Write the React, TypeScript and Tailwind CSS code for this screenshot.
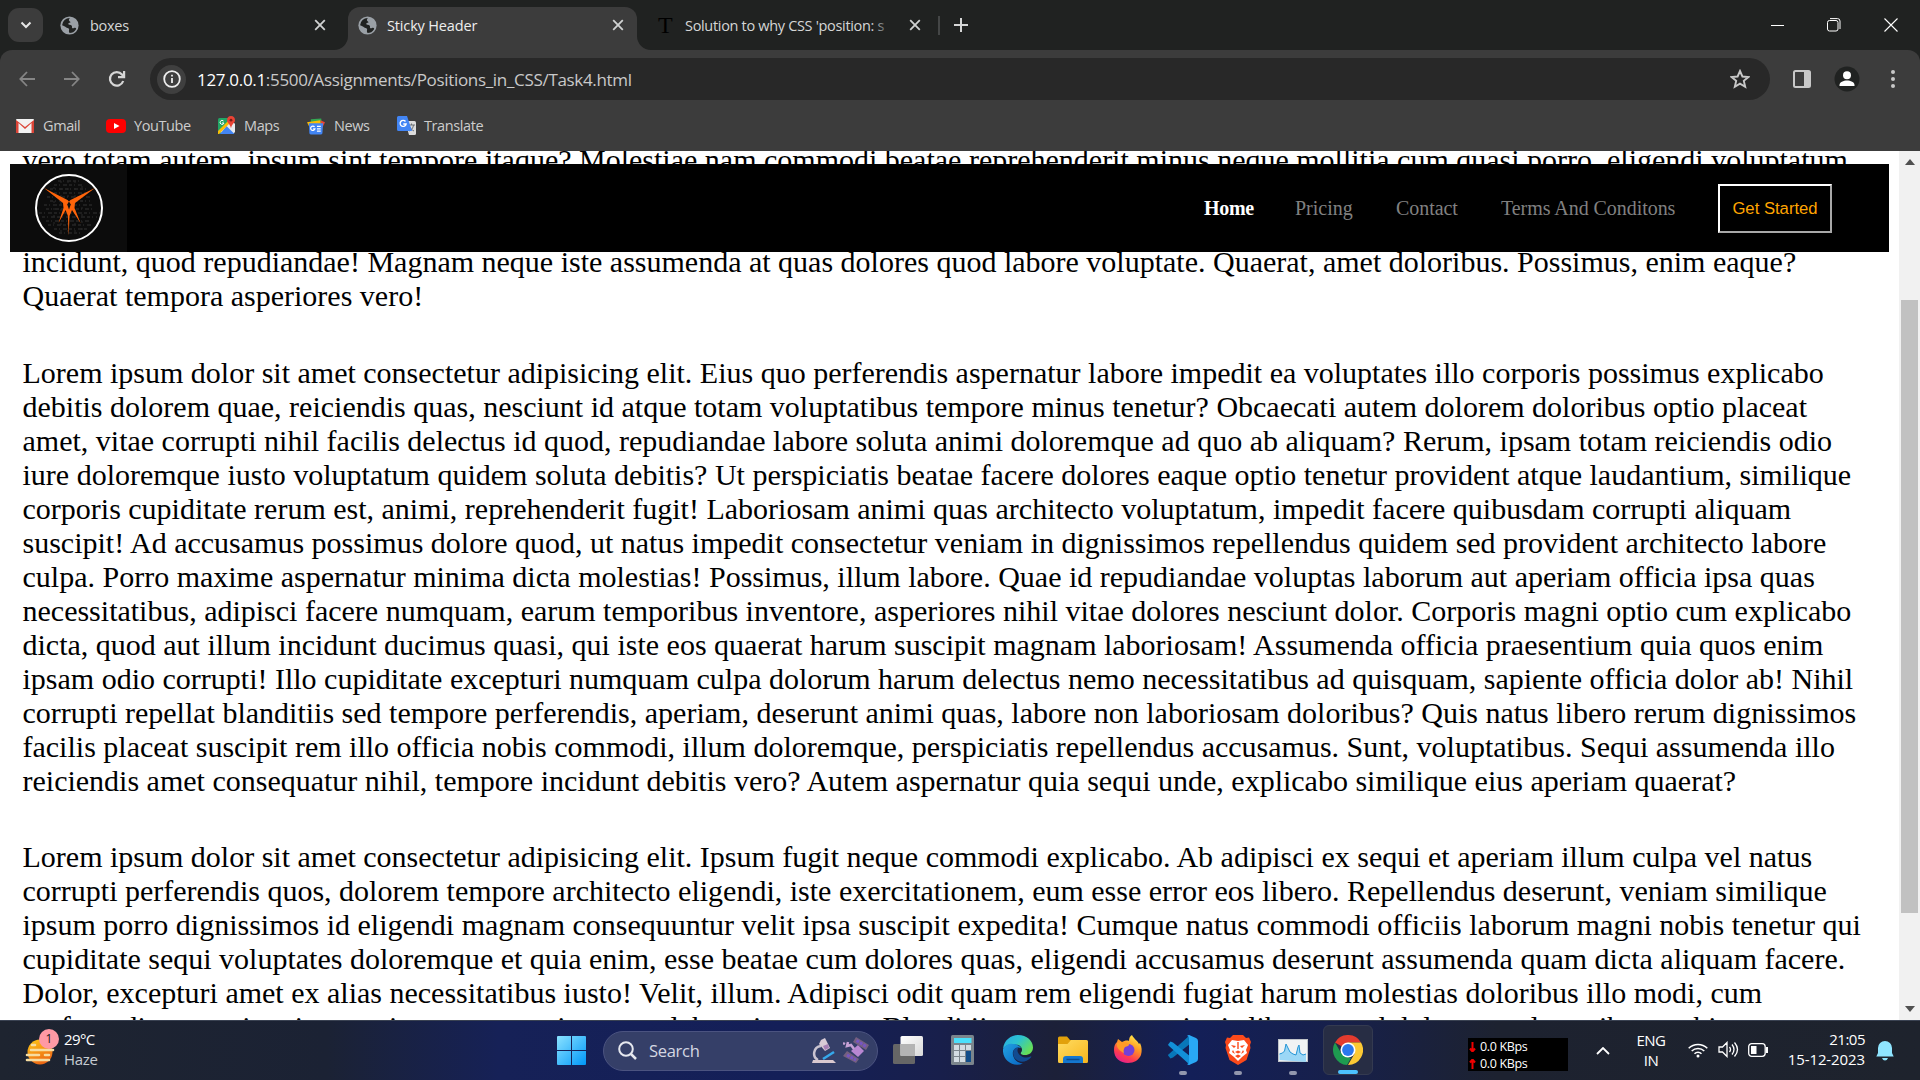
import React from "react";

const ui = "font-['Open_Sans','Noto_Sans',sans-serif]";

function Globe() {
  return (
    <svg width="19" height="19" viewBox="0 0 20 20" className="shrink-0">
      <circle cx="10" cy="10" r="9.6" fill="#9aa0a6" />
      <path d="M10.5 2.2c-1.3 1-1.6 2.5-.4 3.2 1.2.6 1.2 1.500-.2 1.800-1.700.3-1.500 2 .1 2.100 2 .1 3 1 2.600 2.400-.3 1.200.9 1.700 2.100 1 1.600-.9 2.900.1 2 1.600A8 8 0 0 1 10 18c-.4-1.500-.9-2-.5-3 .5-1.200-.3-1.900-1.600-2.300C6 12 5 10.800 3.500 10.300l-1.300-.6A8 8 0 0 1 10.500 2.200z" fill="#202221" />
    </svg>
  );
}

function Cross() {
  return (
    <svg width="12" height="12" viewBox="0 0 12 12" className="shrink-0">
      <path d="M1.200 1.200l9.600 9.600M10.800 1.200L1.200 10.800" stroke="#d0d2d2" strokeWidth="1.800" />
    </svg>
  );
}

function TabStrip() {
  return (
    <div className="flex h-[50px] items-stretch bg-[#202221] text-[14.500px] text-[#d5d6d6]">
      <div className="ml-2 mt-2 flex h-[34px] w-[35px] items-center justify-center rounded-[11px] bg-[#3c3c3c]">
        <svg width="12" height="8" viewBox="0 0 12 8"><path d="M1.500 1.500L6 6l4.500-4.500" fill="none" stroke="#e6e6e6" strokeWidth="2" /></svg>
      </div>
      <div className="flex w-[283px] items-center pl-[17px]">
        <Globe />
        <span className="ml-[11px] flex-1 pt-[1px] tracking-[-0.300px]">boxes</span>
        <Cross />
      </div>
      <div className="relative ml-[22px] mt-[7px] flex w-[289px] items-center rounded-t-[12px] bg-[#3c3c3c] pb-[7px] pl-[10px] pr-[13px] text-[#eeeeee]">
        <svg width="14" height="14" className="absolute -left-[14px] bottom-0"><path d="M14 0v14H0A14 14 0 0 0 14 0z" fill="#3c3c3c" /></svg>
        <svg width="14" height="14" className="absolute -right-[14px] bottom-0"><path d="M0 0v14h14A14 14 0 0 1 0 0z" fill="#3c3c3c" /></svg>
        <Globe />
        <span className="ml-[10px] flex-1 whitespace-nowrap pt-[1px] tracking-[-0.150px]">Sticky Header</span>
        <Cross />
      </div>
      <div className="flex w-[284px] items-center pl-[21px]">
        <span className="w-4 font-['Liberation_Serif',serif] text-[24px] text-black">T</span>
        <div className="relative ml-[11px] w-[207px] overflow-hidden whitespace-nowrap pt-[1px] tracking-[-0.320px]">
          Solution to why CSS 'position: s
          <div className="absolute inset-y-0 right-0 w-[20px] bg-gradient-to-r from-transparent to-[#202221]" />
        </div>
        <div className="ml-[17px]"><Cross /></div>
      </div>
      <div className="ml-[17px] mt-4 h-[19px] w-[2px] bg-[#444646]" />
      <svg width="14" height="14" className="ml-[14px] mt-[18px]"><path d="M7 0v14M0 7h14" stroke="#d5d6d6" strokeWidth="2" /></svg>
      <div className="ml-auto flex items-center gap-[43px] pr-[22px]">
        <svg width="14" height="14"><path d="M1 7.500h13" stroke="#fff" /></svg>
        <svg width="14" height="14" fill="none" stroke="#fff"><rect x="0.500" y="2.500" width="10.500" height="10.500" rx="2" /><path d="M3 .6h7.500a2.500 2.500 0 0 1 2.500 2.500V11" /></svg>
        <svg width="14" height="14"><path d="M.5.5l13 13M13.500.5l-13 13" stroke="#fff" strokeWidth="1.100" /></svg>
      </div>
    </div>
  );
}

function AddressBar() {
  return (
    <div className="flex h-[58px] items-center">
      <svg width="16" height="16" viewBox="0 0 16 16" className="ml-[19px]" fill="none" stroke="#858585" strokeWidth="1.800"><path d="M16 8H1.500M8 1L1.300 8 8 15" /></svg>
      <svg width="16" height="16" viewBox="0 0 16 16" className="ml-[29px]" fill="none" stroke="#858585" strokeWidth="1.800"><path d="M0 8h14.500M8 1l6.700 7L8 15" /></svg>
      <svg width="18" height="18" viewBox="0 0 18 18" className="ml-[28px]" fill="none" stroke="#d6d6d6" strokeWidth="2.200"><path d="M15.200 11A6.800 6.800 0 1 1 14 4.500L16 7M16.100 1v6.200H10" /></svg>
      <div className="ml-[24px] flex h-[42px] w-[1620px] items-center rounded-full bg-[#282828] pl-[7px] pr-[20px]">
        <div className="flex h-[29px] w-[29px] items-center justify-center rounded-full bg-[#3f3f3f]">
          <svg width="18" height="18" fill="none" stroke="#eee" strokeWidth="1.800"><circle cx="9" cy="9" r="7.800" /><path d="M9 8v5M9 4.800v1.800" /></svg>
        </div>
        <span className="ml-[11px] flex-1 whitespace-nowrap pt-[1px] text-[17px] tracking-[-0.320px] text-[#c9c9c9]"><span className="text-white">127.0.0.1</span>:5500/Assignments/Positions_in_CSS/Task4.html</span>
        <svg width="20" height="20" viewBox="0 0 20 20" fill="none" stroke="#c8c8c8" strokeWidth="1.900"><path d="M10 2l2.400 5.500 6 .5-4.600 3.900 1.400 5.900-5.200-3.200-5.200 3.200 1.400-5.900L1.600 8l6-.5z" /></svg>
      </div>
      <svg width="18" height="18" className="ml-[23px]"><rect x="1" y="1" width="16" height="16" rx="1.500" fill="none" stroke="#c8c8c8" strokeWidth="2" /><rect x="11" y="1" width="6" height="16" fill="#c8c8c8" /></svg>
      <svg width="26" height="26" className="ml-[23px]"><circle cx="13" cy="13" r="12.500" fill="#202221" /><circle cx="13" cy="9.200" r="4" fill="#fff" /><path d="M5.500 20v-1c0-3 4-4.500 7.500-4.500s7.500 1.500 7.500 4.500v1z" fill="#fff" /></svg>
      <svg width="4" height="20" className="ml-[31px]" fill="#c8c8c8"><circle cx="2" cy="3" r="2" /><circle cx="2" cy="10" r="2" /><circle cx="2" cy="17" r="2" /></svg>
    </div>
  );
}

const bookmarks = [
  { label: "Gmail", w: "w-[91px]", icon: <svg width="18" height="16" viewBox="0 0 18 16"><rect y="1" width="18" height="14" rx="1" fill="#f2f2f2" /><path d="M0 15V2l9 7 9-7v13h-2.500V5L9 11 2.500 5v10z" fill="#db4437" /></svg> },
  { label: "YouTube", w: "w-[110px]", icon: <svg width="20" height="16" viewBox="0 0 20 16"><rect y="1" width="20" height="14" rx="4" fill="#f00" /><path d="M8 5l5.500 3L8 11z" fill="#fff" /></svg> },
  { label: "Maps", w: "w-[90px]", icon: <svg width="19" height="19" viewBox="0 0 19 19"><rect x="1" y="2" width="16" height="16" rx="1.500" fill="#22a565" /><path d="M1 16L14 3l4 5v8l-2 2z" fill="#e8eaed" /><path d="M9.500 10l8 8H3z" fill="#4285f4" /><path d="M1 15L11 5l2 2L2 18H1z" fill="#fbbc04" /><path d="M14 0a4.200 4.200 0 0 0-4 4.200c0 3 3.200 3.300 4 8 .8-4.700 4-5 4-8A4.200 4.200 0 0 0 14 0z" fill="#ea4335" /><circle cx="14" cy="4.200" r="1.400" fill="#7a1c14" /><path d="M6.500 5a2 2 0 1 0 .5 2H5" stroke="#fff" fill="none" /></svg> },
  { label: "News", w: "w-[90px]", icon: <svg width="18" height="18" viewBox="0 0 19 18"><path d="M4 2l11-1 1 6H4z" fill="#34a853" /><path d="M0 5l14-2 1 6H2z" fill="#fbbc04" /><path d="M14 3l5 2-3 6z" fill="#ea4335" /><path d="M2 6h15l-.7 10.500a1.500 1.500 0 0 1-1.500 1.500H4a1.500 1.500 0 0 1-1.500-1.500z" fill="#4285f4" /><path d="M8 10a2.300 2.300 0 1 0 .4 2H6.500M10.500 9.500h4M10.500 12h4M10.500 14.500h4" stroke="#fff" strokeWidth="1.300" fill="none" /></svg> },
  { label: "Translate", w: "w-[120px]", icon: <svg width="19" height="19" viewBox="0 0 19 19"><path d="M8 5h9.500a1.500 1.500 0 0 1 1.500 1.500v11a1.500 1.500 0 0 1-1.500 1.500H12z" fill="#dcdcdc" /><path d="M11 9h7M14.500 7.500V9M12 15c3-1 4-3 4.500-6M12.500 10.500c1 2 2.500 3.500 4.500 4.500" stroke="#6b7075" fill="none" /><path d="M1.500 0H10l5 15H1.500A1.500 1.500 0 0 1 0 13.500v-12A1.500 1.500 0 0 1 1.500 0z" fill="#4285f4" /><path d="M8.500 5.500a3 3 0 1 0 .6 2.500H6.300" stroke="#fff" strokeWidth="1.400" fill="none" /></svg> },
];

function Bookmarks() {
  return (
    <div className="flex h-[43px] items-center pb-[8px] pl-[15px] text-[14.500px] text-[#cdcdcd]">
      {bookmarks.map((b) => (
        <div key={b.label} className={`flex items-center ${b.w}`}>
          <span className="flex w-5 justify-center">{b.icon}</span>
          <span className="ml-[8px] whitespace-nowrap tracking-[-0.400px]">{b.label}</span>
        </div>
      ))}
    </div>
  );
}

const second = [
  "Lorem ipsum dolor sit amet consectetur adipisicing elit. Eius quo perferendis aspernatur labore impedit ea voluptates illo corporis possimus explicabo",
  "debitis dolorem quae, reiciendis quas, nesciunt id atque totam voluptatibus tempore minus tenetur? Obcaecati autem dolorem doloribus optio placeat",
  "amet, vitae corrupti nihil facilis delectus id quod, repudiandae labore soluta animi doloremque ad quo ab aliquam? Rerum, ipsam totam reiciendis odio",
  "iure doloremque iusto voluptatum quidem soluta debitis? Ut perspiciatis beatae facere dolores eaque optio tenetur provident atque laudantium, similique",
  "corporis cupiditate rerum est, animi, reprehenderit fugit! Laboriosam animi quas architecto voluptatum, impedit facere quibusdam corrupti aliquam",
  "suscipit! Ad accusamus possimus dolore quod, ut natus impedit consectetur veniam in dignissimos repellendus quidem sed provident architecto labore",
  "culpa. Porro maxime aspernatur minima dicta molestias! Possimus, illum labore. Quae id repudiandae voluptas laborum aut aperiam officia ipsa quas",
  "necessitatibus, adipisci facere numquam, earum temporibus inventore, asperiores nihil vitae dolores nesciunt dolor. Corporis magni optio cum explicabo",
  "dicta, quod aut illum incidunt ducimus quasi, qui iste eos quaerat harum suscipit magnam laboriosam! Assumenda officia praesentium quia quos enim",
  "ipsam odio corrupti! Illo cupiditate excepturi numquam culpa dolorum harum delectus nemo necessitatibus ad quisquam, sapiente officia dolor ab! Nihil",
  "corrupti repellat blanditiis sed tempore perferendis, aperiam, deserunt animi quas, labore non laboriosam doloribus? Quis natus libero rerum dignissimos",
  "facilis placeat suscipit rem illo officia nobis commodi, illum doloremque, perspiciatis repellendus accusamus. Sunt, voluptatibus. Sequi assumenda illo",
  "reiciendis amet consequatur nihil, tempore incidunt debitis vero? Autem aspernatur quia sequi unde, explicabo similique eius aperiam quaerat?",
];
const third = [
  "Lorem ipsum dolor sit amet consectetur adipisicing elit. Ipsum fugit neque commodi explicabo. Ab adipisci ex sequi et aperiam illum culpa vel natus",
  "corrupti perferendis quos, dolorem tempore architecto eligendi, iste exercitationem, eum esse error eos libero. Repellendus deserunt, veniam similique",
  "ipsum porro dignissimos id eligendi magnam consequuntur velit ipsa suscipit expedita! Cumque natus commodi officiis laborum magni nobis tenetur qui",
  "cupiditate sequi voluptates doloremque et quia enim, esse beatae cum dolores quas, eligendi accusamus deserunt assumenda quam dicta aliquam facere.",
  "Dolor, excepturi amet ex alias necessitatibus iusto! Velit, illum. Adipisci odit quam rem eligendi fugiat harum molestias doloribus illo modi, cum",
];

function Lines({ lines }: { lines: string[] }) {
  return <>{lines.map((l) => <div key={l}>{l}</div>)}</>;
}

function Page() {
  return (
    <div className="flex h-[869px] overflow-hidden bg-white">
      <div className="relative h-full w-[1899px] overflow-hidden pl-[22.500px] font-['Liberation_Serif',serif] text-[30px] leading-[34px] text-black">
        <div className="-mt-[8px] whitespace-nowrap">
          <div>vero totam autem, ipsum sint tempore itaque? Molestiae nam commodi beatae reprehenderit minus neque mollitia cum quasi porro, eligendi voluptatum</div>
          <div className="mt-[68px]"><Lines lines={["incidunt, quod repudiandae! Magnam neque iste assumenda at quas dolores quod labore voluptate. Quaerat, amet doloribus. Possimus, enim eaque?", "Quaerat tempora asperiores vero!"]} /></div>
          <div className="mt-[43px]"><Lines lines={second} /></div>
          <div className="mt-[42px]">
            <Lines lines={third} />
            <div className="flex">
              <span className="w-[860px]">perferendis a eveniet vitae veniam quas nesciunt eum labore iusto quaerat.</span>
              <span>Blanditiis accusamus veritatis libero quod dolorem voluptatibus architecto</span>
            </div>
          </div>
        </div>
        <header className="absolute left-[10px] top-[13px] flex h-[88px] w-[1879px] items-center bg-black text-[20px] leading-6 text-[#808080]">
          <div className="flex h-full w-[117px] items-center justify-center bg-[#0c0c0c]">
            <svg width="70" height="70" viewBox="0 0 70 70">
              <g stroke="#333" strokeWidth="1" strokeDasharray="3 2 1 3 4 2">
                <path d="M24 8h23M20 12h30M16 16h39M20 20h34M13 24h44M16 28h40M10 32h50M12 36h46M5 40h61M8 44h55M12 48h44M14 52h43M20 56h34M25 60h22" />
              </g>
              <g stroke="#292929" strokeDasharray="2 5"><path d="M20 14v42M27 8v52M34 8v52M41 8v52M48 13v44" /></g>
              <circle cx="35" cy="35" r="33" fill="none" stroke="#fff" strokeWidth="2" />
              <path d="M10 15l23.500 12L35 28.500l1.500-1.500L61 15 41 30l-.5 5 6 15-8.500-13-2.500 6-.8 20-.8-20-2.300-6L24.500 50l5-15-.5-5z" fill="#ff640a" />
              <path d="M35 28.500l-1.800 3 1.800 5 1.800-5z" fill="#111" />
            </svg>
          </div>
          <nav className="ml-auto flex items-center whitespace-nowrap">
            <span className="w-[92px] pl-[1px] font-bold tracking-[-0.300px] text-white">Home</span>
            <span className="w-[101px]">Pricing</span>
            <span className="w-[105px] tracking-[-0.050px]">Contact</span>
            <span className="w-[217px] tracking-[-0.050px]">Terms And Conditons</span>
            <span className="mr-[57px] flex h-[49px] w-[114px] items-center justify-center border-2 border-b-[#a8a8a8] border-l-white border-r-[#a8a8a8] border-t-white pt-[1px] font-['Liberation_Sans',sans-serif] text-[16.670px] text-[#ffa500]">Get Started</span>
          </nav>
        </header>
      </div>
      <div className="flex w-[21px] flex-col items-center justify-between bg-[#f1f1f1] py-[8px]">
        <svg width="10" height="6"><path d="M0 6l5-6 5 6z" fill="#505050" /></svg>
        <div className="mb-[93px] mt-auto h-[613px] w-[17px] bg-[#c1c1c1]" />
        <svg width="10" height="6"><path d="M0 0l5 6 5-6z" fill="#505050" /></svg>
      </div>
    </div>
  );
}

const apps = [
  { id: "view", dot: "", icon: <svg width="30" height="28" viewBox="0 0 30 28"><defs><linearGradient id="tv" y2="1"><stop stopColor="#fff" /><stop offset="1" stopColor="#d8d8d8" /></linearGradient></defs><rect y="8" width="22" height="20" rx="1.500" fill="#666" /><rect x="7.500" width="22.500" height="20" rx="1.500" fill="url(#tv)" /><path d="M7.500 8H22v12H7.500z" fill="#b4b4b4" /></svg> },
  { id: "calc", dot: "", icon: <svg width="24" height="30" viewBox="0 0 24 30"><rect width="23" height="30" rx="1.500" fill="#7b858c" /><rect x="3" y="3" width="17.500" height="5" fill="#4be0fb" /><g fill="#d3dce2"><rect x="3" y="10" width="5" height="5" /><rect x="9" y="10" width="5" height="5" /><rect x="15" y="10" width="5" height="5" /><rect x="3" y="16" width="5" height="5" /><rect x="9" y="16" width="5" height="5" /><rect x="3" y="22" width="5" height="5" /><rect x="9" y="22" width="5" height="5" /></g><rect x="15" y="16" width="5" height="11" fill="#124d89" /></svg> },
  { id: "edge", dot: "", icon: <svg width="30" height="30" viewBox="0 0 30 30"><defs><linearGradient id="eg" y2=".6"><stop stopColor="#29a9e5" /><stop offset=".5" stopColor="#2cc3d0" /><stop offset="1" stopColor="#66df57" /></linearGradient><linearGradient id="eb" y2="1"><stop stopColor="#23a2e1" /><stop offset="1" stopColor="#0865c4" /></linearGradient></defs><path d="M0 14C1 5 8 0 15 0c9 0 15 6 15 12.500 0 5-4 7.500-8 7.500-3 0-5-1-4-2.500 3-4-1-8-6-8C7 9 2 10 0 14z" fill="url(#eg)" /><path d="M0 14c2-4 6-6 10-5 4 0 7 2 8 4-5-2-9 2-8 7 1 5 5 8 10 8.500C10 33-1 25 0 14z" fill="url(#eb)" /><path d="M10.500 16c-1 3 0 8 5 10 4 2 9 0 12-3 1-1 1-2 0-1.500-5 2.500-11 0-12.500-4-1-2-.5-4 1-5-3 0-5 1-5.500 3.500z" fill="#114b91" /></svg> },
  { id: "files", dot: "", icon: <svg width="30" height="28" viewBox="0 0 30 28"><defs><linearGradient id="fo" y2="1"><stop stopColor="#ffdc61" /><stop offset="1" stopColor="#f7b51d" /></linearGradient></defs><path d="M0 2Q0 .5 1.500.5H9L12 4h16v8H0z" fill="#e2a10b" /><path d="M0 8h9.500L13 4h15.500Q30 4 30 5.500v20q0 1.500-1.500 1.500h-27Q0 27 0 25.500z" fill="url(#fo)" /><path d="M5 27v-4q0-3 3-3h14q3 0 3 3v4z" fill="#1577cf" /><path d="M8.500 23.500h13" stroke="#0c4b8c" strokeWidth="1.500" /></svg> },
  { id: "firefox", dot: "", icon: <svg width="30" height="30" viewBox="0 0 30 30"><defs><linearGradient id="ff" x1=".8" x2=".3" y2="1"><stop stopColor="#fff04c" /><stop offset=".4" stopColor="#ff9a24" /><stop offset=".75" stopColor="#ff3a51" /><stop offset="1" stopColor="#e3208f" /></linearGradient></defs><path d="M5 4l4 3c2-1 5-2 7-1 0-3 1-5 3-6 1 3 5 5 7 9l1-1c2 4 2 8 1 12-2 5-7 8-13 8C7 28 1 23 1 15c0-4 1-6 3-8z" fill="url(#ff)" /><circle cx="15.500" cy="15" r="6" fill="#7440d8" /><path d="M4 8c3-2 7 0 9 0 3 0 4 2 2 3l-3 1c-1 2-2 3-1 6-4-2-8-5-7-10z" fill="#ff9b28" /></svg> },
  { id: "code", dot: "w-2 bg-[#9297ad]", icon: <svg width="30" height="30" viewBox="0 0 30 30"><path d="M22 0l1 8L5 22.500 2.500 23.500.5 21q-1-1 .5-2z" fill="#0877b9" /><path d="M22 30l1-8L5 7.500 2.500 6.500.5 9q-1 1 .5 2z" fill="#1290d8" /><path d="M21 0l7 3q2 1 2 3v18q0 2-2 3l-7 3q-1 0-2-1 2 0 2-2V3q0-2-2-2 1-1 2-1z" fill="#29a8f5" /></svg> },
  { id: "brave", dot: "w-2 bg-[#9297ad]", icon: <svg width="26" height="30" viewBox="0 0 26 30"><path d="M8 0h10l3 3 3-.5L26 7l-1 3 .5 3-4 12L13 30 4.500 25 .5 13 1 10 0 7l2-4.500L5 3z" fill="#fb4a1b" /><path d="M7 5l6 1 6-1 4 5-2 5 1 3-5 4-4 4-4-4-5-4 1-3-2-5z" fill="#fff" /><path d="M6 10l5 1-2 2zM20 10l-5 1 2 2zM10 17l3-1.500 3 1.500-3 1.500zM8 15l2 4-3-2zM18 15l-2 4 3-2zM10 21l3-1.500 3 1.500-3 2zM12.300 7h1.400v7h-1.400z" fill="#fb4a1b" /></svg> },
  { id: "monitor", dot: "w-2 bg-[#9297ad]", icon: <svg width="30" height="23" viewBox="0 0 30 23"><rect x=".5" y=".5" width="29" height="22" fill="#f1f3f4" stroke="#bfc3c8" /><path d="M1.500 21v-6l3-1 2-2L8 5l2 4 2 4 3 2 3 1 2-8 1-2 1 8 3 2 3-1v8z" fill="#9bd7f6" /><path d="M1.500 15l3-1 2-2L8 5l2 4 2 4 3 2 3 1 2-8 1-2 1 8 3 2 3-1" stroke="#2395d6" fill="none" /></svg> },
  { id: "chrome", dot: "w-5 bg-[#4cc2ff]", icon: <svg width="30" height="30" viewBox="0 0 30 30"><path d="M15 15L2 7.500A15 15 0 0 1 28 7.500H15z" fill="#e33b2e" /><path d="M15 7.500h13A15 15 0 0 1 15 30l6.500-11.250z" fill="#fcc934" /><path d="M2 7.500l6.500 11.250L15 22.500l3 .5-4 7A15 15 0 0 1 2 7.500z" fill="#1e9b50" /><circle cx="15" cy="15" r="7.500" fill="#fff" /><circle cx="15" cy="15" r="5.900" fill="#2b78ed" /></svg> },
];

function Taskbar() {
  return (
    <div className="flex h-[60px] items-center border-t border-[#3a4252] bg-[linear-gradient(90deg,#1e2430_0%,#1b2234_17%,#162157_26%,#141f58_41%,#181f4b_49%,#1c2038_55%,#131f58_62%,#17204a_70%,#1d2230_78%,#1e232d_100%)] text-[15px] text-white">
      <div className="relative mb-[4px] ml-[24px] h-[36px] w-[40px]">
        <svg width="34" height="36" viewBox="0 0 34 36"><defs><linearGradient id="sun" x2=".5" y2="1"><stop stopColor="#ffca16" /><stop offset="1" stopColor="#ed6814" /></linearGradient></defs><circle cx="16" cy="21" r="12.500" fill="url(#sun)" /><path d="M8 14h3M7 19h22M3 24h12M21 24h4M3 29h22" stroke="#f7dda0" strokeWidth="2.600" strokeLinecap="round" /></svg>
        <span className="absolute left-[15px] top-[-2px] flex h-5 w-5 items-center justify-center rounded-full bg-[#ff99a4] text-[12px] text-[#202020]">1</span>
      </div>
      <div className="mb-[4px] w-[493px] leading-[20px]"><div className="tracking-[-0.600px]">29°C</div><div className="tracking-[-0.300px] text-[#c6cbd2]">Haze</div></div>
      <svg width="29" height="29" viewBox="0 0 29 29"><defs><linearGradient id="win" x2="1" y2="1"><stop stopColor="#8be2ff" /><stop offset="1" stopColor="#0097f8" /></linearGradient></defs><path d="M0 1q0-1 1-1h13v14H0zM15 0h13q1 0 1 1v13H15zM0 15h14v14H1q-1 0-1-1zM15 15h14v13q0 1-1 1H15z" fill="url(#win)" /></svg>
      <div className="ml-[17px] flex h-[40px] w-[275px] items-center rounded-full border border-[#4b5380] bg-[#353f68] pl-[14px] pr-[8px]">
        <svg width="19" height="19" viewBox="0 0 19 19" fill="none" stroke="#e6e8ef" strokeWidth="2"><circle cx="8" cy="8" r="6.800" /><path d="M13 13l5 5" strokeWidth="2.500" /></svg>
        <span className="ml-[12px] flex-1 pt-[1px] text-[16.500px] tracking-[-0.300px] text-[#d4d7e2]">Search</span>
        <svg width="25" height="25" viewBox="0 0 25 25"><path d="M9 8C1 9 0 19 6 22" fill="none" stroke="#c9c3d0" strokeWidth="2.500" /><path d="M9 2l4-2 5 10-5 3-6-7z" fill="#d8cbd6" /><path d="M11 8l5-2 1 4-4 2z" fill="#a57fb5" /><path d="M11 21L22 14" stroke="#36a9ec" strokeWidth="2.500" /><path d="M1 22h20l3 3H0z" fill="#dac9cf" /></svg>
        <svg width="26" height="27" viewBox="0 0 26 27" className="ml-[6px]"><path d="M8 14l7-6 6 6-6 6z" fill="#b887d2" /><path d="M13 0l13 8-3 5L10 5zM4 14l12 8-3 4L0 19z" fill="#756080" /><path d="M13.500 3.500l9.500 6M4 18l9 5" stroke="#7655c2" strokeWidth="3" strokeDasharray="3 1" /><path d="M5 5l-1 4 4-1 3 4M2 7l-2-1" stroke="#c7a1d6" strokeWidth="2.500" fill="none" /></svg>
      </div>
      <div className="ml-[2px] flex h-full items-center">
        {apps.map((a) => (
          <div key={a.id} className="flex w-[55px] justify-center">
            <div className={a.id === "chrome" ? "relative mb-px flex h-[50px] w-[50px] items-center justify-center rounded-md border border-[#343a50] bg-[#272d44]" : "relative mb-px flex h-[50px] w-[50px] items-center justify-center"}>
              {a.icon}
              {a.dot && <span className={`absolute bottom-0 h-1 rounded-full ${a.dot}`} />}
            </div>
          </div>
        ))}
      </div>
      <div className="ml-[93px] mt-[9px] flex h-[33px] w-[100px] flex-col self-start bg-black pl-[1px] pt-0 mt-[17px] text-[12.500px] leading-[17px] tracking-[-0.350px]">
        {["M3.500 0v9M1 6.500l2.500 3 2.500-3", "M3.500 10V1M1 3.500l2.500-3 2.500 3"].map((d) => (
          <div key={d} className="flex items-center gap-[4px]"><svg width="7" height="10"><path d={d} stroke="#f00000" strokeWidth="2" fill="none" /></svg>0.0 KBps</div>
        ))}
      </div>
      <svg width="14" height="8" className="ml-[28px]" fill="none" stroke="#fff" strokeWidth="1.800"><path d="M1 7l6-6 6 6" /></svg>
      <div className="mb-[2px] ml-[21px] w-[40px] text-center leading-[20px] tracking-[-0.500px]"><div>ENG</div><div>IN</div></div>
      <svg width="20" height="16" viewBox="0 0 20 16" className="mb-[2px] ml-[17px]" fill="none" stroke="#fff" strokeWidth="1.500"><path d="M.7 6.300a13 13 0 0 1 18.600 0M3.700 9a9 9 0 0 1 12.600 0M6.500 11.800a5 5 0 0 1 7 0" /><circle cx="10" cy="14" r="1.500" fill="#fff" stroke="none" /></svg>
      <svg width="21" height="17" viewBox="0 0 21 17" className="mb-[2px] ml-[10px]" fill="none" stroke="#fff" strokeWidth="1.300"><path d="M1 6h3.500L9 1.500v14L4.500 11H1zM11.500 6q2 2.500 0 5M14 3.500q4 5 0 10M16.500 1.500q6 7 0 14" /></svg>
      <svg width="21" height="14" viewBox="0 0 21 14" className="mb-[2px] ml-[9px]" fill="none" stroke="#fff" strokeWidth="1.300"><rect x=".7" y=".7" width="16.500" height="12.600" rx="3" /><rect x="3" y="3" width="5.500" height="8" fill="#fff" stroke="none" /><path d="M19 4v6" strokeWidth="2" /></svg>
      <div className="mb-[4px] ml-auto mr-[11px] text-right leading-[20px] tracking-[-0.500px]"><div>21:05</div><div className="tracking-[-0.100px]">15-12-2023</div></div>
      <svg width="18" height="20" viewBox="0 0 18 20" className="mr-[26px]" fill="#8fe5ff"><path d="M9 0a7 7 0 0 1 7 7v5l1.700 3.500H.3L2 12V7a7 7 0 0 1 7-7zM6 17h6q-1 2.500-3 2.500T6 17z" /></svg>
    </div>
  );
}

export default function App() {
  return (
    <div className={`flex h-[1080px] w-[1920px] flex-col overflow-hidden bg-[#202221] ${ui}`}>
      <TabStrip />
      <div className="h-[101px] rounded-t-[12px] bg-[#3c3c3c]">
        <AddressBar />
        <Bookmarks />
      </div>
      <Page />
      <Taskbar />
    </div>
  );
}
